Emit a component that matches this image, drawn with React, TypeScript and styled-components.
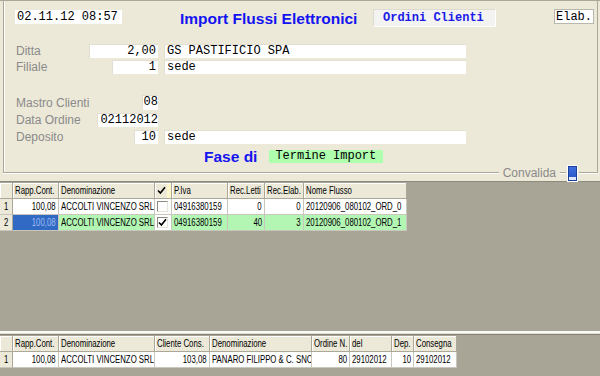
import styled, { createGlobalStyle } from "styled-components"

const GlobalStyle = createGlobalStyle`
  html, body {
    margin: 0;
    padding: 0;
  }
  body {
    background: #a8a596;
    font-family: "Liberation Sans", Arial, sans-serif;
  }
`

const Screen = styled.div`
  width: 600px;
  height: 376px;
  overflow: hidden;
  background: #a8a596;
  display: flex;
  flex-direction: column;
`

const TopPanel = styled.div`
  box-sizing: border-box;
  height: 182px;
  flex: none;
  background: #ece9d8;
  border-top: 1px solid #aca899;
  border-bottom: 1px solid #8c8a7c;
  padding: 0 2px 0 3px;
`

const Frame = styled.div`
  box-sizing: border-box;
  height: 171px;
  border-left: 1px solid #aca899;
  border-right: 1px solid #aca899;
  box-shadow: inset 1px 0 0 #fff;
  display: flex;
  flex-direction: column;
`

const HeaderRow = styled.div`
  display: flex;
  align-items: flex-start;
  height: 18px;
  margin-top: 8px;
`

const Mono = styled.div`
  box-sizing: border-box;
  font-family: "Liberation Mono", "Courier New", monospace;
  font-size: 12px;
  white-space: nowrap;
  overflow: hidden;
`

const DateBox = styled(Mono)`
  margin: 1px 0 0 11px;
  width: 107px;
  height: 14px;
  line-height: 14px;
  background: #fff;
  padding-left: 2px;
  color: #000;
`

const Title = styled.div`
  width: 193px;
  padding-left: 58px;
  flex: none;
  font-size: 15.5px;
  font-weight: bold;
  color: #1414f0;
  line-height: 20px;
  white-space: nowrap;
`

const TagBox = styled(Mono)`
  width: 123px;
  height: 18px;
  line-height: 16px;
  padding-left: 9px;
  background: #f3f3f2;
  border: 1px solid #dddbd0;
  border-right-color: #fff;
  border-bottom-color: #fff;
  color: #1a1ae6;
  font-weight: bold;
`

const StatusBox = styled(Mono)`
  margin: 0 3px 0 auto;
  width: 40px;
  height: 15px;
  line-height: 14px;
  padding-left: 1px;
  background: #fff;
  border: 1px solid #b9b7ab;
  color: #000;
`

const FormRow = styled.div<{ $top: number; $h?: number }>`
  display: grid;
  grid-template-columns: 142px 302px;
  column-gap: 6px;
  height: ${(p) => p.$h ?? 14}px;
  margin-top: ${(p) => p.$top}px;
  padding-left: 12px;
`

const LabelCell = styled.div`
  display: flex;
  align-items: center;
  justify-content: space-between;
`

const Label = styled.span`
  font-size: 12px;
  color: #8a8a8a;
  white-space: nowrap;
`

const Field = styled(Mono)<{ $w?: number; $right?: boolean; $tight?: boolean }>`
  width: ${(p) => (p.$w ? `${p.$w}px` : "100%")};
  height: 100%;
  line-height: 13px;
  background: #fff;
  border-top: 1px solid #e2dfd2;
  border-left: 1px solid #e2dfd2;
  padding: 0 ${(p) => (p.$tight ? 0 : 2)}px;
  text-align: ${(p) => (p.$right ? "right" : "left")};
  color: #000;
`

const PhaseRow = styled.div`
  display: flex;
  align-items: center;
  gap: 12px;
  height: 13px;
  margin-top: 6px;
  padding-left: 200px;
`

const PhaseLabel = styled.span`
  font-size: 15.5px;
  font-weight: bold;
  color: #1414f0;
  line-height: 13px;
`

const PhaseBox = styled(Mono)`
  width: 114px;
  height: 13px;
  line-height: 13px;
  padding-left: 6px;
  background: #aeffae;
  color: #000;
`

const BottomRow = styled.div`
  display: flex;
  align-items: center;
  height: 2px;
`

const Etch = styled.div<{ $w?: number }>`
  box-sizing: border-box;
  height: 2px;
  border-top: 1px solid #aca899;
  border-bottom: 1px solid #fff;
  ${(p) => (p.$w ? `width: ${p.$w}px; flex: none;` : "flex: 1;")}
`

const Legend = styled.span`
  font-size: 12px;
  color: #8a8a8a;
  line-height: 14px;
  padding: 0 4px;
`

const Knob = styled.div`
  box-sizing: border-box;
  flex: none;
  width: 9px;
  height: 15px;
  margin: 0 2px;
  background: linear-gradient(#3f6fe0, #2b58c8 80%, #dfe6f5 80%);
  border: 1px solid #1c3f9a;
  box-shadow: 0 0 0 1px #fff;
`

const DarkArea = styled.div<{ $h?: number }>`
  ${(p) => (p.$h ? `height: ${p.$h}px; flex: none;` : "flex: 1;")}
  padding-top: 1px;
  box-sizing: border-box;
`

const Splitter = styled.div`
  flex: none;
  height: 4px;
  box-sizing: border-box;
  border-top: 2px solid #fbfbf6;
  border-bottom: 1px solid #86847a;
  background: #e2dfd0;
`

const Table = styled.div<{ $cols: string }>`
  display: grid;
  grid-template-columns: ${(p) => p.$cols};
  width: max-content;
  font-family: "Liberation Sans", Arial, sans-serif;
  font-size: 10px;
  color: #000;
`

const HeadCell = styled.div<{ $mark?: boolean }>`
  box-sizing: border-box;
  height: 16px;
  line-height: 15px;
  padding: 0 2px;
  background: ${(p) =>
    p.$mark ? "linear-gradient(90deg, #ece9d8 76%, #fff6cc 76%)" : "#ece9d8"};
  border-right: 1px solid #aca899;
  border-bottom: 1px solid #aca899;
  box-shadow: inset 1px 1px 0 #fff;
  white-space: nowrap;
  overflow: hidden;
  display: flex;
  align-items: center;
`

const Cell = styled.div<{ $right?: boolean; $bg?: string; $color?: string }>`
  box-sizing: border-box;
  height: 16px;
  line-height: 15px;
  padding: 0 2px;
  background: ${(p) => p.$bg ?? "#fff"};
  color: ${(p) => p.$color ?? "#000"};
  border-right: 1px solid #c9c7bd;
  border-bottom: 1px solid #c9c7bd;
  white-space: nowrap;
  overflow: hidden;
  display: flex;
  align-items: center;
  justify-content: ${(p) => (p.$right ? "flex-end" : "flex-start")};
`

const IndexCell = styled(Cell)`
  background: #ece9d8;
  padding-left: 4px;
  border-right-color: #aca899;
`

/* the grid font in the screenshot is horizontally condensed */
const Narrow = styled.span<{ $right?: boolean }>`
  display: inline-block;
  flex: none;
  transform: scaleX(0.78);
  transform-origin: ${(p) => (p.$right ? "right" : "left")} center;
`

const CheckBox = styled.div`
  box-sizing: border-box;
  width: 11px;
  height: 11px;
  background: #fff;
  border-top: 1px solid #8d8b80;
  border-left: 1px solid #8d8b80;
  border-right: 1px solid #e6e4da;
  border-bottom: 1px solid #e6e4da;
  display: flex;
  align-items: center;
  justify-content: center;
`

const Tick = () => (
  <svg width="9" height="9" viewBox="0 0 9 9">
    <path d="M1 4.5 L3.4 7 L8 1.2" fill="none" stroke="#000" strokeWidth="1.6" />
  </svg>
)

type Col = { title: string; width: number; right?: boolean }

const upperCols: Col[] = [
  { title: "", width: 13 },
  { title: "Rapp.Cont.", width: 46, right: true },
  { title: "Denominazione", width: 96 },
  { title: "check", width: 17 },
  { title: "P.Iva", width: 56 },
  { title: "Rec.Letti", width: 37, right: true },
  { title: "Rec.Elab.", width: 39, right: true },
  { title: "Nome Flusso", width: 103 },
]

const upperRows = [
  { values: ["1", "100,08", "ACCOLTI VINCENZO SRL", "", "04916380159", "0", "0", "20120906_080102_ORD_0"], checked: false, active: false },
  { values: ["2", "100,08", "ACCOLTI VINCENZO SRL", "", "04916380159", "40", "3", "20120906_080102_ORD_1"], checked: true, active: true },
]

const lowerCols: Col[] = [
  { title: "", width: 13 },
  { title: "Rapp.Cont.", width: 46, right: true },
  { title: "Denominazione", width: 96 },
  { title: "Cliente Cons.", width: 55, right: true },
  { title: "Denominazione", width: 102 },
  { title: "Ordine N.", width: 38, right: true },
  { title: "del", width: 42 },
  { title: "Dep.", width: 22, right: true },
  { title: "Consegna", width: 43 },
]

const lowerRows = [
  ["1", "100,08", "ACCOLTI VINCENZO SRL", "103,08", "PANARO FILIPPO & C. SNC", "80", "29102012", "10", "29102012"],
]

const colTemplate = (cols: Col[]) => cols.map((c) => `${c.width}px`).join(" ")

const UpperGrid = () => (
  <Table $cols={colTemplate(upperCols)}>
    {upperCols.map((c, i) =>
      c.title === "check" ? (
        <HeadCell key={i} $mark>
          <Tick />
        </HeadCell>
      ) : (
        <HeadCell key={i}>
          <Narrow>{c.title}</Narrow>
        </HeadCell>
      )
    )}
    {upperRows.map((row, r) =>
      row.values.map((v, i) => {
        if (i === 0)
          return (
            <IndexCell key={`${r}-${i}`}>
              <Narrow>{v}</Narrow>
            </IndexCell>
          )
        if (i === 3)
          return (
            <Cell key={`${r}-${i}`} $bg="#fff">
              <CheckBox>{row.checked && <Tick />}</CheckBox>
            </Cell>
          )
        const selected = row.active && i === 1
        const right = upperCols[i].right
        return (
          <Cell
            key={`${r}-${i}`}
            $right={right}
            $bg={selected ? "#316ac5" : row.active ? "#b3f5b3" : "#fff"}
            $color={selected ? "#9ebcf0" : undefined}
          >
            <Narrow $right={right}>{v}</Narrow>
          </Cell>
        )
      })
    )}
  </Table>
)

const LowerGrid = () => (
  <Table $cols={colTemplate(lowerCols)}>
    {lowerCols.map((c, i) => (
      <HeadCell key={i}>
        <Narrow>{c.title}</Narrow>
      </HeadCell>
    ))}
    {lowerRows.map((row, r) =>
      row.map((v, i) =>
        i === 0 ? (
          <IndexCell key={`${r}-${i}`}>
            <Narrow>{v}</Narrow>
          </IndexCell>
        ) : (
          <Cell key={`${r}-${i}`} $right={lowerCols[i].right}>
            <Narrow $right={lowerCols[i].right}>{v}</Narrow>
          </Cell>
        )
      )
    )}
  </Table>
)

export default function App() {
  return (
    <>
      <GlobalStyle />
      <Screen>
        <TopPanel>
          <Frame>
            <HeaderRow>
              <DateBox>02.11.12 08:57</DateBox>
              <Title>Import Flussi Elettronici</Title>
              <TagBox>Ordini Clienti</TagBox>
              <StatusBox>Elab.</StatusBox>
            </HeaderRow>

            <FormRow $top={17}>
              <LabelCell>
                <Label>Ditta</Label>
                <Field $w={69} $right>2,00</Field>
              </LabelCell>
              <Field>GS PASTIFICIO SPA</Field>
            </FormRow>
            <FormRow $top={2}>
              <LabelCell>
                <Label>Filiale</Label>
                <Field $w={46} $right>1</Field>
              </LabelCell>
              <Field>sede</Field>
            </FormRow>

            <FormRow $top={21} $h={15}>
              <LabelCell>
                <Label>Mastro Clienti</Label>
                <Field $w={16} $right $tight>08</Field>
              </LabelCell>
            </FormRow>
            <FormRow $top={3}>
              <LabelCell>
                <Label>Data Ordine</Label>
                <Field $w={61} $right $tight>02112012</Field>
              </LabelCell>
            </FormRow>
            <FormRow $top={3}>
              <LabelCell>
                <Label>Deposito</Label>
                <Field $w={24} $right>10</Field>
              </LabelCell>
              <Field>sede</Field>
            </FormRow>

            <PhaseRow>
              <PhaseLabel>Fase di</PhaseLabel>
              <PhaseBox>Termine Import</PhaseBox>
            </PhaseRow>
          </Frame>
          <BottomRow>
            <Etch />
            <Legend>Convalida</Legend>
            <Etch $w={6} />
            <Knob />
            <Etch $w={19} />
          </BottomRow>
        </TopPanel>

        <DarkArea $h={149}>
          <UpperGrid />
        </DarkArea>
        <Splitter />
        <DarkArea>
          <LowerGrid />
        </DarkArea>
      </Screen>
    </>
  )
}
